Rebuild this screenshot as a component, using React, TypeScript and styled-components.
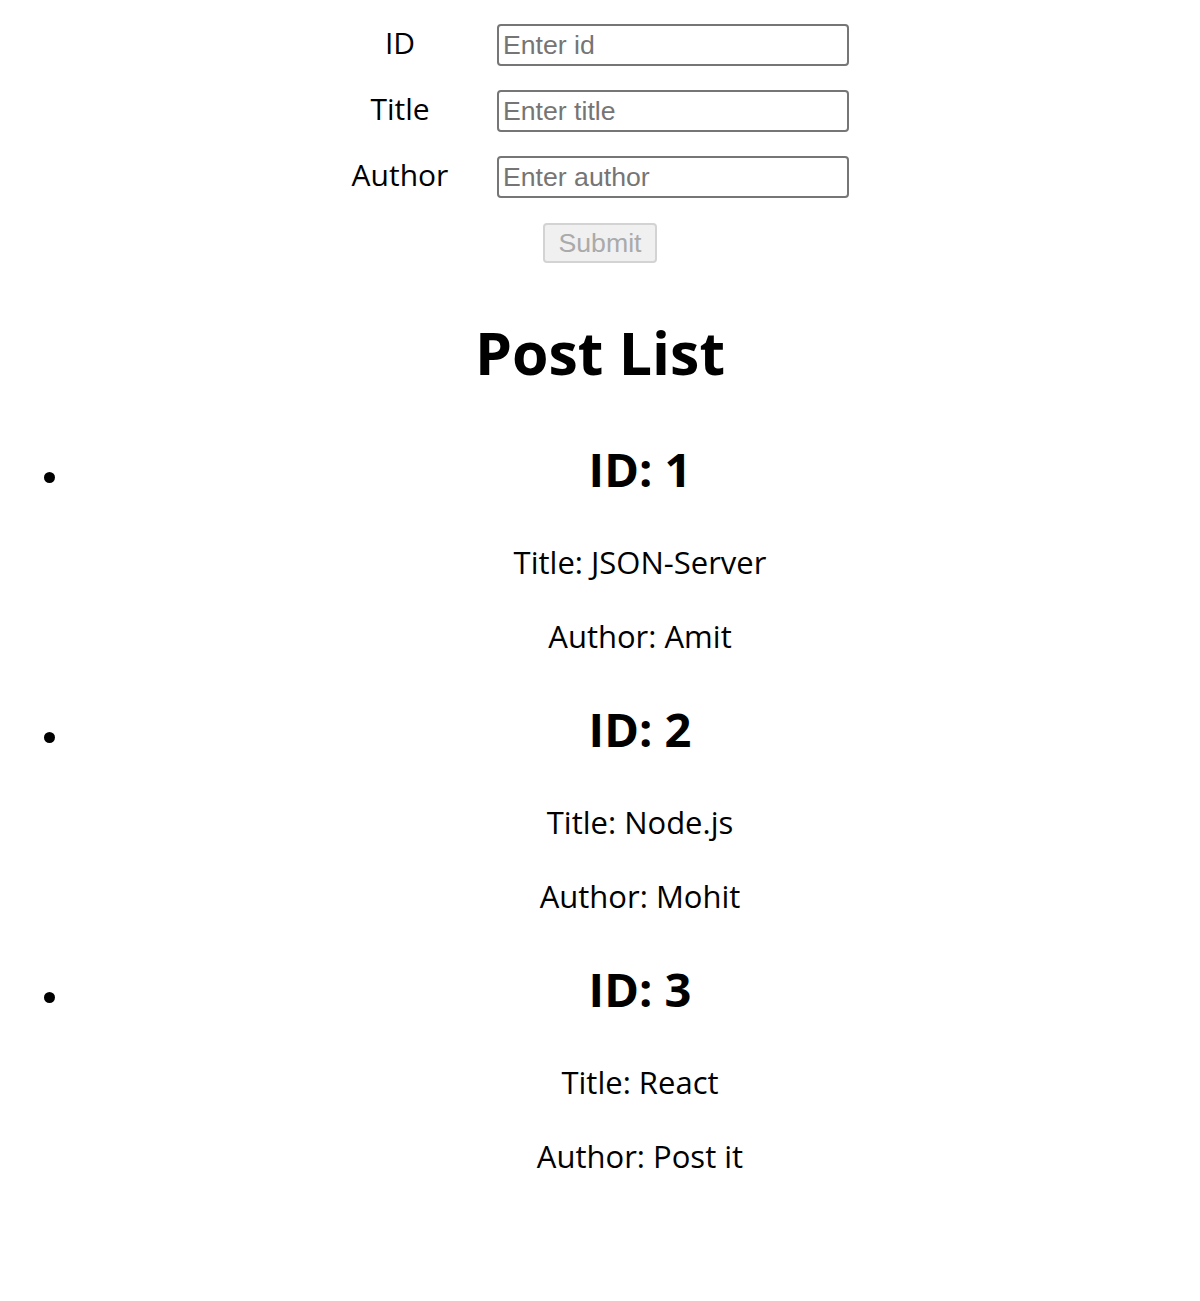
import React from "react";
import styled, { createGlobalStyle } from "styled-components";

const GlobalStyle = createGlobalStyle`
  html, body { background: #ffffff; }
  body {
    margin: 16px;
    font-family: "Open Sans", "Noto Sans", sans-serif;
    font-size: 31px;
    color: #000000;
  }
`;

const Page = styled.div`
  text-align: center;
`;

const Form = styled.form`
  display: flex;
  flex-direction: column;
  align-items: center;
  gap: 24px;
  padding-top: 8px;
`;

const Fields = styled.div`
  display: grid;
  grid-template-columns: 98px 352px;
  column-gap: 48px;
  row-gap: 24px;
  align-items: baseline;
`;

const Label = styled.label`
  font-size: 30px;
  line-height: 32px;
  text-align: center;
`;

const Input = styled.input`
  box-sizing: border-box;
  width: 352px;
  height: 42px;
  margin: 0;
  padding: 2px 4px;
  border: 2px solid #767676;
  border-radius: 4px;
  font-family: "Liberation Sans", Arial, sans-serif;
  font-size: 26.67px;
  color: #000;
  background: #fff;
  &::placeholder { color: #757575; }
`;

const SubmitButton = styled.button`
  box-sizing: border-box;
  height: 40px;
  margin-top: 1px;
  padding: 0 14px;
  border: 2px solid #d3d3d3;
  border-radius: 4px;
  background: #f0f0f0;
  color: #aaaaaa;
  font-family: "Liberation Sans", Arial, sans-serif;
  font-size: 26.67px;
  line-height: 34px;
`;

const Heading = styled.h1`
  margin: 47px 0 42px;
  font-size: 59px;
  line-height: 85px;
  font-weight: 700;
`;

const List = styled.ul`
  margin: 0;
  padding-left: 80px;
  list-style: none;
`;

const Item = styled.li`
  position: relative;

  &::before {
    content: "";
    position: absolute;
    left: -52px;
    top: 35px;
    width: 11px;
    height: 11px;
    border-radius: 50%;
    background: #000;
  }
`;

const PostId = styled.h2`
  margin: 40px 0;
  font-size: 47px;
  line-height: 64px;
  font-weight: 700;
`;

const Line = styled.p`
  margin: 32px 0;
  font-size: 31px;
  line-height: 42px;
`;

const posts = [
  { id: 1, title: "JSON-Server", author: "Amit" },
  { id: 2, title: "Node.js", author: "Mohit" },
  { id: 3, title: "React", author: "Post it" },
];

export default function App() {
  return (
    <Page>
      <GlobalStyle />
      <Form onSubmit={(e) => e.preventDefault()}>
        <Fields>
          <Label htmlFor="id">ID</Label>
          <Input id="id" placeholder="Enter id" />
          <Label htmlFor="title">Title</Label>
          <Input id="title" placeholder="Enter title" />
          <Label htmlFor="author">Author</Label>
          <Input id="author" placeholder="Enter author" />
        </Fields>
        <SubmitButton type="submit" disabled>
          Submit
        </SubmitButton>
      </Form>
      <Heading>Post List</Heading>
      <List>
        {posts.map((p) => (
          <Item key={p.id}>
            <PostId>ID: {p.id}</PostId>
            <Line>Title: {p.title}</Line>
            <Line>Author: {p.author}</Line>
          </Item>
        ))}
      </List>
    </Page>
  );
}
